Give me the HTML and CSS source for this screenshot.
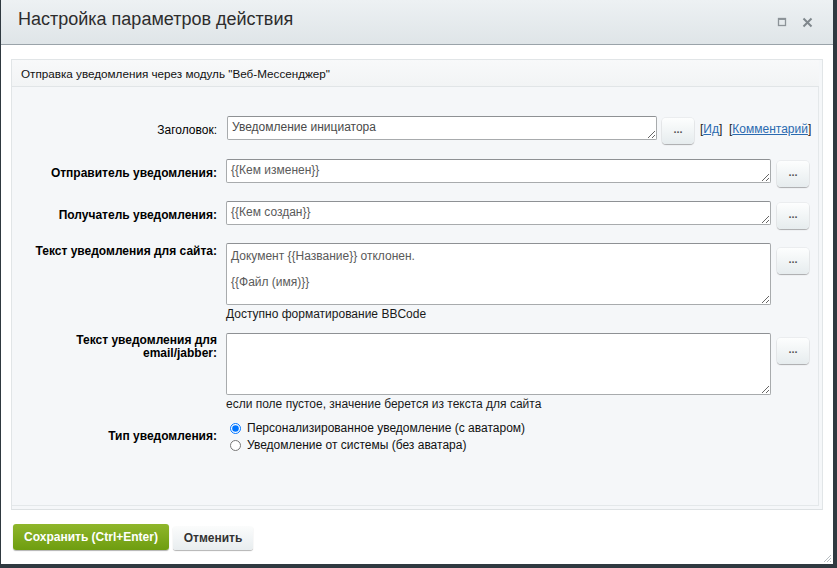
FILE: index.html
```html
<!DOCTYPE html>
<html lang="ru">
<head>
<meta charset="utf-8">
<title>Настройка параметров действия</title>
<link rel="stylesheet" href="styles.css">
</head>
<body>
<div class="dialog">
  <div class="dlg-head">
    <div class="dlg-title">Настройка параметров действия</div>
    <div class="dlg-icons">
      <svg class="ic" width="10" height="10" viewBox="0 0 10 10"><rect x="1.5" y="1.5" width="7" height="7" fill="none" stroke="#8c9398" stroke-width="1.3"/><line x1="1.5" y1="2.2" x2="8.5" y2="2.2" stroke="#8c9398" stroke-width="1.5"/></svg>
      <svg class="ic" width="11" height="11" viewBox="0 0 11 11"><path d="M1.5 1.5 L9.5 9.5 M9.5 1.5 L1.5 9.5" stroke="#7f878c" stroke-width="2"/></svg>
    </div>
  </div>
  <div class="dlg-content">
    <div class="panel">
      <div class="panel-head">Отправка уведомления через модуль "Веб-Мессенджер"</div>
      <div class="panel-body">
        <div class="row row-mid row-first">
          <div class="lbl normal">Заголовок:</div>
          <div class="fld">
            <div class="line">
              <textarea class="ta ta-short" rows="1">Уведомление инициатора</textarea>
              <button class="dots">...</button>
              <span class="links"><span class="br">[</span><a href="#">Ид</a><span class="br">]</span> &nbsp;<span class="br">[</span><a href="#">Комментарий</a><span class="br">]</span></span>
            </div>
          </div>
        </div>
        <div class="row row-mid r2">
          <div class="lbl">Отправитель уведомления:</div>
          <div class="fld">
            <div class="line">
              <textarea class="ta" rows="1">{{Кем изменен}}</textarea>
              <button class="dots">...</button>
            </div>
          </div>
        </div>
        <div class="row row-mid r3">
          <div class="lbl">Получатель уведомления:</div>
          <div class="fld">
            <div class="line">
              <textarea class="ta" rows="1">{{Кем создан}}</textarea>
              <button class="dots">...</button>
            </div>
          </div>
        </div>
        <div class="row row-top r4">
          <div class="lbl lbl-top">Текст уведомления для сайта:</div>
          <div class="fld">
            <div class="line">
              <textarea class="ta ta-big">Документ {{Название}} отклонен.

{{Файл (имя)}}</textarea>
              <button class="dots dots-top">...</button>
            </div>
            <div class="hint">Доступно форматирование BBCode</div>
          </div>
        </div>
        <div class="row row-top r5">
          <div class="lbl lbl-top2">Текст уведомления для<br>email/jabber:</div>
          <div class="fld">
            <div class="line">
              <textarea class="ta ta-big"></textarea>
              <button class="dots dots-top">...</button>
            </div>
            <div class="hint">если поле пустое, значение берется из текста для сайта</div>
          </div>
        </div>
        <div class="row row-mid r6">
          <div class="lbl">Тип уведомления:</div>
          <div class="fld radios">
            <label class="radio"><input type="radio" name="t" checked> Персонализированное уведомление (с аватаром)</label>
            <label class="radio"><input type="radio" name="t"> Уведомление от системы (без аватара)</label>
          </div>
        </div>
      </div>
    </div>
    <div class="dlg-buttons">
      <button class="btn-save">Сохранить (Ctrl+Enter)</button>
      <button class="btn-cancel">Отменить</button>
    </div>
  </div>
  <svg class="grip" width="10" height="10" viewBox="0 0 10 10"><path d="M9 2 L2 9 M9 5 L5 9 M9 8 L8 9" stroke="#b8bec2" stroke-width="1"/></svg>
</div>
</body>
</html>
```
FILE: styles.css
```css
html, body {
  margin: 0;
  padding: 0;
}
body {
  background: #2f3940;
  width: 837px;
  height: 568px;
  overflow: hidden;
  font-family: "Liberation Sans", Arial, sans-serif;
  font-size: 12px;
  color: #000;
}
.dialog {
  position: relative;
  margin-left: 1px;
  width: 832px;
  height: 564px;
  background: #fff;
  box-sizing: border-box;
}
.dlg-head {
  height: 45px;
  box-sizing: border-box;
  background: linear-gradient(#edf1f3, #dfe5e8);
  border-bottom: 1px solid #9aa3a9;
  display: flex;
  align-items: center;
  justify-content: space-between;
  padding: 0 20px 0 17px;
}
.dlg-title {
  font-size: 18px;
  color: #2d2d2d;
  margin-top: -5px;
}
.dlg-icons {
  display: flex;
  align-items: center;
  gap: 15px;
}
.dlg-content {
  padding: 14px 10px 0 10px;
}
.panel {
  border: 1px solid #e1e5e7;
  border-bottom: 1px solid #dde1e3;
  background: #f5f7f9;
  padding-bottom: 3px;
  padding-right: 3px;
}
.panel-head {
  height: 27px;
  line-height: 27px;
  box-sizing: border-box;
  padding-left: 9px;
  font-size: 11.7px;
  background: linear-gradient(#f8f9fa, #f2f4f5);
  border-bottom: 1px solid #e1e5e7;
  color: #111;
}
.panel-body {
  height: 419px;
  box-sizing: border-box;
  padding-top: 29px;
  border-bottom: 1px solid #e4e8ea;
  border-right: 1px solid #e4e8ea;
}
.row {
  display: flex;
}
.row-mid {
  align-items: center;
}
.row-top {
  align-items: flex-start;
}
.lbl {
  width: 214px;
  flex: none;
  text-align: right;
  font-weight: bold;
  color: #000;
  padding-right: 9px;
  box-sizing: border-box;
  line-height: 13px;
}
.lbl.normal {
  font-weight: normal;
  padding-right: 9px;
}
.lbl-top {
  padding-top: 2px;
}
.lbl-top2 {
  padding-top: 1px;
}
.fld {
  flex: none;
}
.line {
  display: flex;
  align-items: flex-start;
}
.ta {
  display: block;
  width: 545px;
  height: 24px;
  box-sizing: border-box;
  border: 1px solid #a8abad;
  border-top-color: #8e9194;
  border-radius: 2px;
  background: #fff;
  font-family: "Liberation Sans", Arial, sans-serif;
  font-size: 12px;
  line-height: 13px;
  color: #5a5a5a;
  padding: 4px 4px;
  margin: 0;
  resize: both;
  overflow: hidden;
}
.ta-short {
  width: 430px;
  color: #4a4a4a;
}
.ta-big {
  height: 62px;
  padding-top: 6px;
}
.dots {
  width: 32px;
  height: 26px;
  margin: 2px 0 0 6px;
  padding: 0 0 4px;
  border: none;
  border-radius: 4px;
  background: linear-gradient(#fdfefe, #e6ecee);
  box-shadow: 0 1px 1px rgba(0,0,0,0.28), 0 0 0 1px rgba(0,0,0,0.04);
  font-family: "Liberation Sans", Arial, sans-serif;
  font-size: 11px;
  font-weight: bold;
  color: #555;
  line-height: 16px;
}
.dots-top {
  margin-top: 5px;
}
.row-first .dots {
  margin-left: 5px;
  margin-top: 2px;
}
.links {
  margin-left: 6px;
  margin-top: 6px;
  font-size: 12px;
  white-space: nowrap;
}
.links a {
  color: #2a6ab0;
  text-decoration: underline;
}
.links .br {
  color: #222;
}
.row-first .fld {
  margin-left: 1px;
}
.r2 { margin-top: 15px; }
.r3 { margin-top: 14px; }
.r4 { margin-top: 14px; }
.r5 { margin-top: 12px; }
.r6 { margin-top: 10px; }
.hint {
  margin-top: 2px;
  line-height: 14px;
  color: #1a1a1a;
}
.radios {
  display: flex;
  flex-direction: column;
  gap: 3px;
  margin-left: 3px;
}
.radio {
  display: flex;
  align-items: center;
  line-height: 14px;
  color: #111;
}
.radio input {
  width: 11px;
  height: 11px;
  margin: 0 6px 0 1px;
}
.dlg-buttons {
  display: flex;
  align-items: flex-start;
  gap: 4px;
  padding: 14px 0 0 2px;
}
.btn-save {
  width: 156px;
  height: 26px;
  border: none;
  border-radius: 3px;
  background: linear-gradient(#8fb62b, #6e9d10);
  box-shadow: 0 1px 1px rgba(0,0,0,0.3);
  color: #fff;
  font-family: "Liberation Sans", Arial, sans-serif;
  font-size: 12px;
  font-weight: bold;
  padding: 0;
}
.btn-cancel {
  width: 80px;
  height: 24px;
  margin-top: 2px;
  border: none;
  border-radius: 3px;
  background: linear-gradient(#fbfcfc, #e8edef);
  box-shadow: 0 1px 1px rgba(0,0,0,0.3);
  color: #333;
  font-family: "Liberation Sans", Arial, sans-serif;
  font-size: 12px;
  font-weight: bold;
  padding: 0;
}
.grip {
  position: absolute;
  right: 1px;
  bottom: 1px;
}
```
